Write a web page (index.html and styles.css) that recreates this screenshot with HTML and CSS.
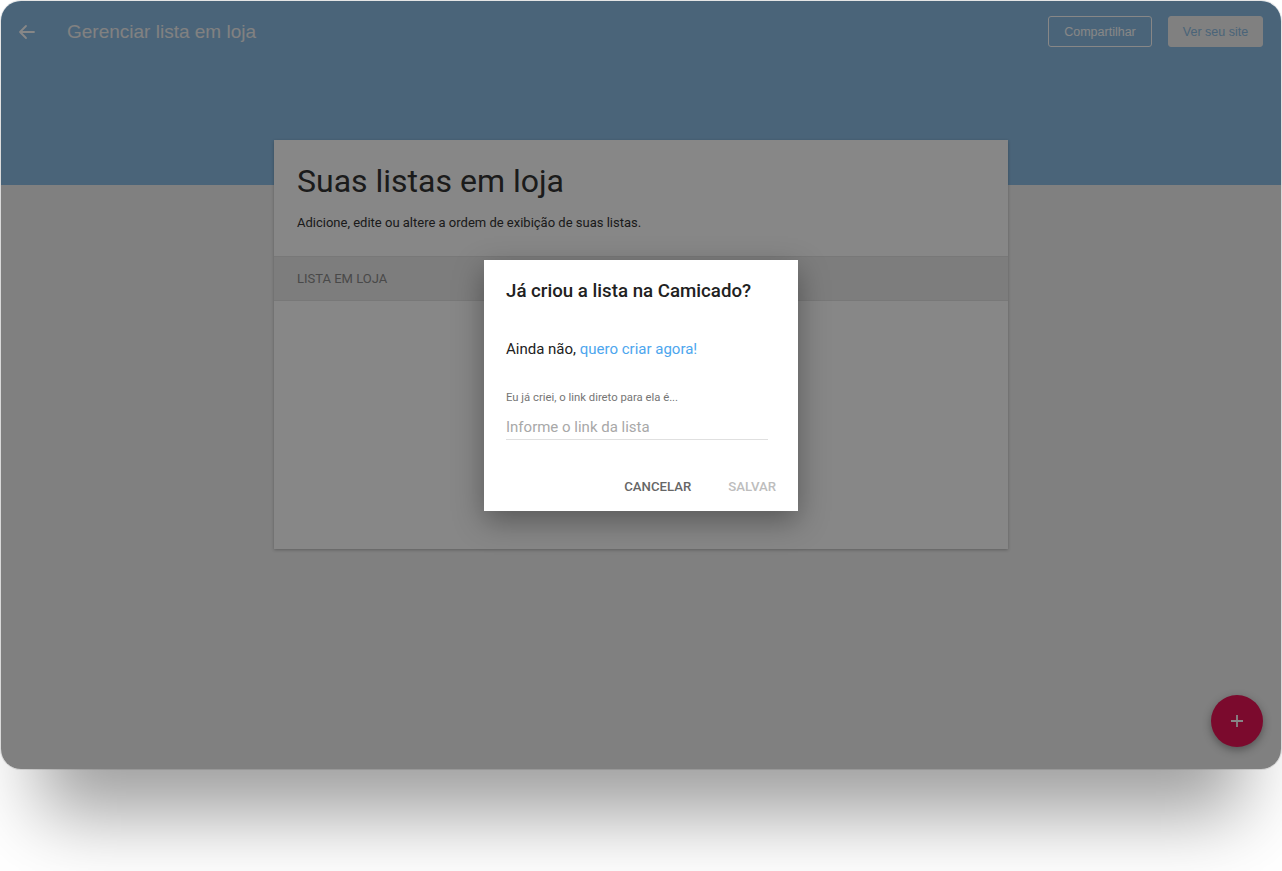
FILE: index.html
```html
<!DOCTYPE html>
<html lang="pt-BR">
<head>
<meta charset="UTF-8">
<meta name="viewport" content="width=device-width, initial-scale=1.0">
<title>Gerenciar lista em loja</title>
<link rel="stylesheet" href="styles.css">
</head>
<body>

<div class="frame">
<div class="window">
  <header class="header">
    <div class="topbar">
      <svg class="back" width="24" height="24" viewBox="0 0 24 24">
        <path d="M19 12H5M11 6l-6 6 6 6" fill="none" stroke="#fff" stroke-width="1.8" stroke-linecap="round" stroke-linejoin="round"/>
      </svg>
      <h1 class="page-title">Gerenciar lista em loja</h1>
      <div class="actions">
        <button class="btn-outline">Compartilhar</button>
        <button class="btn-filled">Ver seu site</button>
      </div>
    </div>
  </header>

  <main class="main">
    <section class="card">
      <div class="card-head">
        <h2>Suas listas em loja</h2>
        <p>Adicione, edite ou altere a ordem de exibição de suas listas.</p>
      </div>
      <div class="table-head">Lista em loja</div>
      <div class="table-body"></div>
    </section>
  </main>

  <button class="fab">
    <svg width="24" height="24" viewBox="0 0 24 24">
      <path d="M12 6v12M6 12h12" stroke="#fff" stroke-width="1.8"/>
    </svg>
  </button>

  <div class="overlay">
    <div class="dialog">
      <h3>Já criou a lista na Camicado?</h3>
      <p class="dialog-text">Ainda não, <a href="#">quero criar agora!</a></p>
      <label class="field-label" for="link">Eu já criei, o link direto para ela é...</label>
      <input type="text" id="link" class="field" placeholder="Informe o link da lista">
      <div class="dialog-actions">
        <button class="btn-text">Cancelar</button>
        <button class="btn-text disabled">Salvar</button>
      </div>
    </div>
  </div>
</div>
</div>

</body>
</html>
```

FILE: styles.css
```css
html, body {
  background: #fff;
}

body {
  margin: 0;
  padding: 1px;
  min-height: 871px;
  box-sizing: border-box;
  font-family: Roboto, "Noto Sans", sans-serif;
}

.frame {
  width: 1280px;
  height: 768px;
  border-radius: 20px;
  box-shadow: 0 0 0 1px rgba(0,0,0,0.1), 0 85px 70px -40px rgba(0,0,0,0.38);
}

.window {
  position: relative;
  height: 100%;
  border-radius: 20px;
  overflow: hidden;
  background: #f1f1f1;
}

.header {
  height: 184px;
  background: #8cbde4;
}

.topbar {
  display: flex;
  align-items: center;
  height: 61px;
  padding: 0 18px 0 14px;
}

.back {
  display: block;
}

.page-title {
  margin: 0 0 0 28px;
  font-family: "Liberation Sans", Arial, sans-serif;
  font-weight: normal;
  font-size: 19px;
  color: #f4f4f4;
}

.actions {
  margin-left: auto;
  display: flex;
  gap: 16px;
}

.actions button {
  height: 31px;
  border-radius: 3px;
  font-family: "Liberation Sans", Arial, sans-serif;
  font-size: 12.5px;
  cursor: pointer;
}

.btn-outline {
  width: 104px;
  background: transparent;
  border: 1px solid #fff;
  color: #fff;
}

.btn-filled {
  width: 95px;
  background: #f2f2f2;
  border: 1px solid #f2f2f2;
  color: #8cbde4;
}

.main {
  display: flex;
  justify-content: center;
}

.card {
  width: 734px;
  margin-top: -45px;
  background: #fff;
  box-shadow: 0 1px 3px rgba(0,0,0,0.25);
}

.card-head {
  padding: 21px 23px 23px;
}

.card-head h2 {
  margin: 0;
  font-size: 32px;
  line-height: 40px;
  font-weight: normal;
  color: #333;
}

.card-head p {
  margin: 12px 0 0;
  font-size: 13px;
  line-height: 20px;
  color: #333;
}

.table-head {
  height: 43px;
  line-height: 43px;
  padding: 0 23px;
  background: #ececec;
  border-top: 1px solid #e2e2e2;
  border-bottom: 1px solid #e2e2e2;
  font-size: 13px;
  text-transform: uppercase;
  color: #8a8a8a;
}

.table-body {
  height: 248px;
}

.fab {
  position: absolute;
  right: 18px;
  bottom: 22px;
  width: 52px;
  height: 52px;
  border: none;
  border-radius: 50%;
  background: #e81355;
  box-shadow: 0 3px 8px rgba(0,0,0,0.35);
  display: flex;
  align-items: center;
  justify-content: center;
}

.overlay {
  position: absolute;
  inset: 0;
  background: rgba(0,0,0,0.47);
  display: flex;
  align-items: center;
  justify-content: center;
}

.dialog {
  width: 314px;
  box-sizing: border-box;
  padding: 19px 22px 6px;
  background: #fff;
  box-shadow: 0 10px 28px rgba(0,0,0,0.35);
}

.dialog h3 {
  margin: 0;
  font-size: 18.7px;
  line-height: 24px;
  font-weight: 500;
  color: #212121;
}

.dialog-text {
  margin: 36px 0 0;
  font-size: 15px;
  line-height: 20px;
  color: #212121;
}

.dialog-text a {
  color: #4da6ee;
  text-decoration: none;
}

.field-label {
  display: block;
  margin-top: 32px;
  font-size: 11.3px;
  line-height: 14px;
  color: #757575;
}

.field {
  display: block;
  width: 262px;
  box-sizing: border-box;
  margin-top: 10px;
  padding: 2px 0 1px;
  border: none;
  border-bottom: 1px solid #e0e0e0;
  font-family: inherit;
  font-size: 15px;
  line-height: 21px;
  outline: none;
}

.field::placeholder {
  color: #a8a8a8;
}

.dialog-actions {
  display: flex;
  justify-content: flex-end;
  gap: 21px;
  margin: 29px -8px 0 0;
}

.btn-text {
  height: 36px;
  padding: 0 8px;
  background: none;
  border: none;
  font-family: inherit;
  font-size: 13.2px;
  font-weight: 500;
  text-transform: uppercase;
  color: #666;
  cursor: pointer;
}

.btn-text.disabled {
  color: #bdbdbd;
}
```
